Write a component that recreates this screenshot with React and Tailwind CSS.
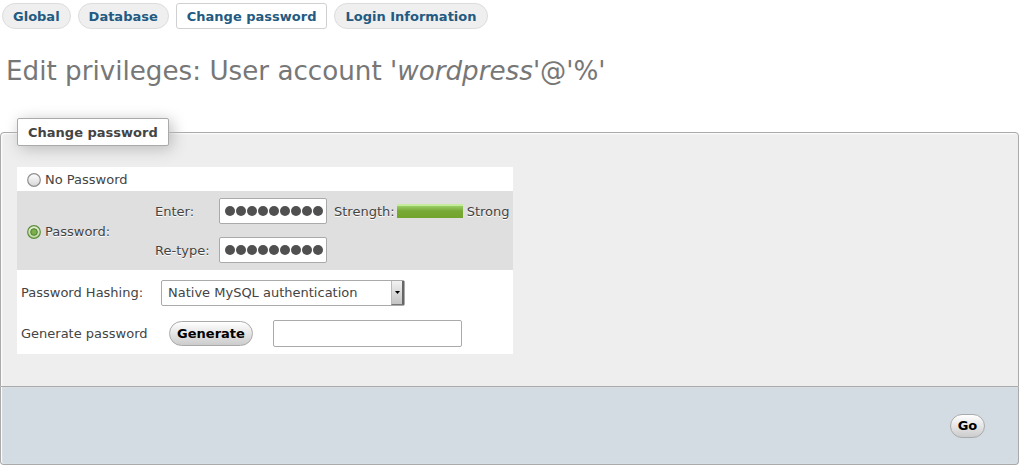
import React from "react";

const font = { fontFamily: '"DejaVu Sans", Verdana, sans-serif' };

function Tab({ label, active }) {
  return (
    <div
      className={
        "h-[26px] px-[10px] pt-[1px] flex items-center text-[13px] font-bold text-[#235a81] border " +
        (active
          ? "bg-white border-[#d0d0d0] rounded-[3px]"
          : "bg-[#efefef] border-[#dcdcdc] rounded-full")
      }
    >
      {label}
    </div>
  );
}

function Radio({ checked }) {
  return (
    <svg width="14" height="14" viewBox="0 0 14 14" className="shrink-0">
      <defs>
        <linearGradient id={checked ? "rg1" : "rg0"} x1="0" y1="0" x2="0" y2="1">
          <stop offset="0" stopColor={checked ? "#e4f2d6" : "#ffffff"} />
          <stop offset="1" stopColor={checked ? "#b8d89a" : "#d6d6d6"} />
        </linearGradient>
      </defs>
      <circle cx="7" cy="7" r="6.3" fill={`url(#${checked ? "rg1" : "rg0"})`} stroke={checked ? "#5d8c3c" : "#8f8f8f"} strokeWidth="1.2" />
      {checked && <circle cx="7" cy="7" r="3.3" fill="#7cae4c" stroke="#4f7d2f" strokeWidth="1" />}
    </svg>
  );
}

function Dots() {
  return (
    <div className="w-[108px] h-[26px] bg-white border border-[#aaa] rounded-[2px] flex items-center pl-[5px] gap-[1px]">
      {Array.from({ length: 9 }).map((_, i) => (
        <span key={i} className="block w-[10px] h-[10px] rounded-full bg-[#505050]" />
      ))}
    </div>
  );
}

function Btn({ children, className = "" }) {
  return (
    <button
      className={
        "px-[7px] rounded-full border border-[#aaa] bg-gradient-to-b from-[#ffffff] to-[#cccccc] text-[13px] font-bold text-black flex items-center justify-center " +
        className
      }
      style={font}
    >
      {children}
    </button>
  );
}

export default function App() {
  return (
    <div className="min-h-[472px] bg-white text-[13px] text-[#444]" style={font}>
      <div className="flex gap-[7px] pt-[3px] pl-[2px]">
        <Tab label="Global" />
        <Tab label="Database" />
        <Tab label="Change password" active />
        <Tab label="Login Information" />
      </div>

      <h2 className="mt-[27px] pl-[6px] text-[26.2px] leading-[30px] font-normal text-[#777] [text-shadow:0_1px_0_#fff]">
        Edit privileges: User account '<i>wordpress</i>'@'%'
      </h2>

      <fieldset className="mt-[32px] mr-[8px] border border-[#aaa] rounded-t-[4px] bg-[#eee] shadow-[inset_1px_1px_2px_#fff] pt-[21px] pb-[32px] px-0 [text-shadow:0_1px_0_#fff]">
        <legend className="ml-[16px] px-[10px] pt-[6px] pb-[4px] leading-[16px] border border-[#aaa] rounded-[2px] bg-white font-bold text-[#444] shadow-[3px_3px_15px_#bbb]">
          Change password
        </legend>

        <div className="ml-[16px] w-[496px]">
          {/* No password */}
          <div className="h-[24px] bg-white flex items-center pl-[10px] pt-[2px] gap-[4px]">
            <Radio />
            <span>No Password</span>
          </div>

          {/* Password */}
          <div className="h-[79px] bg-[#dfdfdf] flex items-center">
            <div className="w-[138px] pl-[10px] pt-[2px] flex items-center gap-[4px]">
              <Radio checked />
              <span>Password:</span>
            </div>
            <div className="flex flex-col gap-[13px]">
              <div className="flex items-center">
                <span className="w-[64px] pt-[1px]">Enter:</span>
                <Dots />
                <span className="ml-[7px] pt-[1px]">Strength:</span>
                <span className="ml-[2px] w-[66px] h-[14px] bg-gradient-to-b from-[#a9dc7a] via-[#78a834] to-[#72a52d] shadow-[inset_0_2px_0_#c4ec9c]" />
                <span className="ml-[4px] pt-[1px]">Strong</span>
              </div>
              <div className="flex items-center">
                <span className="w-[64px] pt-[1px]">Re-type:</span>
                <Dots />
              </div>
            </div>
          </div>

          {/* Hashing + generate */}
          <div className="bg-white pt-[10px] pb-[7px] pl-[4px] flex flex-col gap-[14px]">
            <div className="flex items-center h-[26px]">
              <span className="w-[140px]">Password Hashing:</span>
              <div className="w-[244px] h-[26px] border border-[#aaa] rounded-[2px] bg-white flex items-center">
                <span className="flex-1 pl-[6px] text-[#444]">Native MySQL authentication</span>
                <div className="w-[13px] h-full bg-gradient-to-b from-[#f2f2f2] to-[#c4c4c4] border-l border-[#bbb] border-r-2 border-r-[#666] border-b border-b-[#777] flex items-center justify-center">
                  <svg width="5" height="3" viewBox="0 0 5 3">
                    <path d="M0 0H5L2.5 3Z" fill="#000" />
                  </svg>
                </div>
              </div>
            </div>
            <div className="flex items-center h-[27px]">
              <span className="w-[148px]">Generate password</span>
              <Btn className="h-[25px] w-[84px]">Generate</Btn>
              <div className="ml-[20px] w-[189px] h-[27px] border border-[#aaa] rounded-[2px] bg-white" />
            </div>
          </div>
        </div>
      </fieldset>

      <div className="mr-[8px] h-[78px] border-x border-b border-[#aaa] rounded-b-[4px] bg-[#d3dce3] shadow-[inset_1px_0_1px_#fff] flex items-center justify-end pr-[33px]">
        <Btn className="h-[24px] w-[35px]">Go</Btn>
      </div>
    </div>
  );
}
